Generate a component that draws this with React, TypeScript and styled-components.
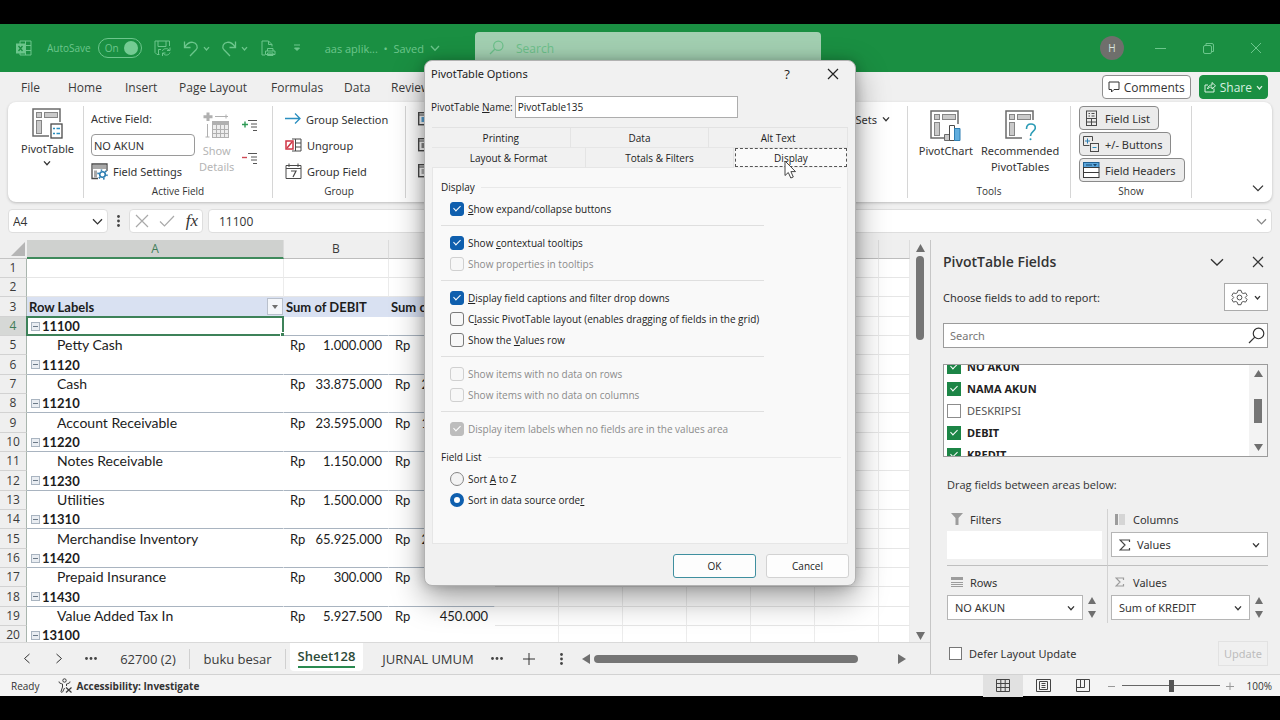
import React from "react";
import styled, { createGlobalStyle, css } from "styled-components";

const UI = `"Open Sans", "Noto Sans", sans-serif`;
const UI_WIDE = `"Noto Sans", "Open Sans", sans-serif`;
const CELL = `Lato, "Noto Sans", sans-serif`;
const GREEN = "#1a8f42";
const MINT = "#6cc68c";

const GlobalStyle = createGlobalStyle`
  *, *::before, *::after { box-sizing: border-box; }
  body { margin: 0; background: #000; font-family: ${UI}; font-size: 12px; color: #333; }
  button, input, select { font: inherit; color: inherit; margin: 0; padding: 0; border: 0; background: none; border-radius: 0; }
  svg { display: block; flex: none; }
  fieldset { margin: 0; padding: 0; border: 0; min-width: 0; }
  legend { padding: 0; width: 100%; }
`;

/* ---------- shell ---------- */
const Screen = styled.div`
  position: relative;
  height: 100vh;
  padding: 24px 0;
  display: flex;
  flex-direction: column;
  background: #000;
  overflow: hidden;
`;
const AppWindow = styled.div`
  flex: 1;
  min-height: 0;
  display: flex;
  flex-direction: column;
  background: #f0f0f0;
`;

/* ---------- title bar ---------- */
const TitleBar = styled.header`
  flex: none;
  height: 48px;
  display: grid;
  grid-template-columns: 475px minmax(0, 346px) 1fr;
  align-items: center;
  background: ${GREEN};
  color: ${MINT};
  font-size: 11px;
`;
const QuickAccess = styled.div`
  display: flex;
  align-items: center;
  padding-left: 16px;
`;
const GhostButton = styled.button<{ $left?: number }>`
  display: flex;
  align-items: center;
  gap: 4px;
  margin-left: ${(p) => p.$left ?? 0}px;
`;
const AutoSave = styled.label`
  display: flex;
  align-items: center;
  gap: 7px;
  margin-left: 15px;
  font-size: 10px;
`;
const Toggle = styled.span`
  position: relative;
  display: flex;
  align-items: center;
  width: 44px;
  height: 20px;
  padding-left: 6px;
  border: 1px solid ${MINT};
  border-radius: 10px;
  input {
    position: absolute;
    right: 3px;
    width: 14px;
    height: 14px;
    border-radius: 50%;
    background: #74cb93;
    appearance: none;
  }
`;
const FileName = styled.button`
  display: flex;
  align-items: center;
  gap: 6px;
  margin-left: 24px;
  white-space: nowrap;
`;
const TitleSearch = styled.label`
  align-self: end;
  height: 40px;
  display: flex;
  align-items: start;
  gap: 12px;
  padding: 8px 14px;
  background: #a2cfb1;
  border-radius: 4px 4px 0 0;
  color: #6cc08a;
  input { width: 200px; height: 16px; font-size: 12px; }
  input::placeholder { color: #6cc08a; opacity: 1; }
`;
const WindowControls = styled.div`
  display: flex;
  align-items: center;
  justify-content: flex-end;
  padding-right: 18px;
`;
const Avatar = styled.button`
  width: 24px;
  height: 24px;
  margin-right: 6px;
  border-radius: 50%;
  background: #6f6f6c;
  color: #d9e4dc;
  font-size: 10px;
`;
const WindowButton = styled.button`
  width: 36px;
  height: 24px;
  margin-left: 12px;
  display: flex;
  align-items: center;
  justify-content: center;
  &:last-child { width: 12px; margin-left: 24px; }
`;

/* ---------- ribbon ---------- */
const MenuRow = styled.nav`
  flex: none;
  height: 30px;
  display: flex;
  align-items: center;
  padding: 0 12px 0 21px;
  font-size: 12px;
`;
const MenuTab = styled.a<{ $w: number }>`
  flex: none;
  width: ${(p) => p.$w}px;
  color: #3a3a3a;
  text-decoration: none;
  white-space: nowrap;
`;
const Spacer = styled.div` flex: 1; `;
const PillButton = styled.button<{ $solid?: boolean }>`
  height: 24px;
  display: flex;
  align-items: center;
  gap: 4px;
  padding: 0 ${(p) => (p.$solid ? 4 : 5)}px;
  margin-left: 8px;
  border-radius: 4px;
  border: 1px solid ${(p) => (p.$solid ? GREEN : "#8f8f8f")};
  background: ${(p) => (p.$solid ? GREEN : "#fff")};
  color: ${(p) => (p.$solid ? "#d8f0e0" : "#333")};
`;
const Ribbon = styled.section`
  flex: none;
  height: 100px;
  margin: 0 8px;
  display: flex;
  padding: 4px 0;
  background: #fff;
  border-radius: 8px;
  box-shadow: 0 1px 3px rgba(0, 0, 0, 0.22);
`;
const Group = styled.div<{ $w?: number }>`
  flex: ${(p) => (p.$w ? `0 0 ${p.$w}px` : "1 1 0")};
  min-width: 0;
  display: flex;
  flex-direction: column;
  border-right: 1px solid #d6d6d6;
  &:last-child { border-right: 0; }
`;
const GroupBody = styled.div<{ $pad?: string; $gap?: number; $justify?: string }>`
  flex: 1;
  min-height: 0;
  display: flex;
  justify-content: ${(p) => p.$justify ?? "flex-start"};
  gap: ${(p) => p.$gap ?? 0}px;
  padding: ${(p) => p.$pad ?? "0"};
`;
const GroupName = styled.div`
  height: 14px;
  line-height: 14px;
  font-size: 10px;
  text-align: center;
`;
const Stack = styled.div<{ $w?: number; $gap?: number }>`
  display: flex;
  flex-direction: column;
  gap: ${(p) => p.$gap ?? 0}px;
  width: ${(p) => (p.$w ? `${p.$w}px` : "auto")};
`;
const BigButton = styled.button<{ $muted?: boolean }>`
  display: flex;
  flex-direction: column;
  align-items: center;
  gap: ${(p) => (p.$muted ? 4 : 2)}px;
  line-height: 16px;
  font-size: 11px;
  font-family: ${UI_WIDE};
  color: ${(p) => (p.$muted ? "#b5b5b5" : "#333")};
`;
const LineButton = styled.button`
  height: 26px;
  display: flex;
  align-items: center;
  gap: 5px;
  font-size: 11px;
  font-family: ${UI_WIDE};
  white-space: nowrap;
`;
const FieldLabel = styled.label`
  height: 26px;
  line-height: 26px;
  font-size: 11px;
  font-family: ${UI_WIDE};
`;
const FieldInput = styled.input`
  width: 104px;
  height: 22px;
  margin: 2px 0;
  padding: 0 2px;
  border: 1px solid #9a9a9a;
  border-radius: 4px;
  background: #fff;
  font-size: 11px;
  font-family: ${UI_WIDE};
`;
const ToggleButton = styled.button`
  height: 24px;
  margin-bottom: 2px;
  padding: 0 8px 0 3px;
  display: flex;
  align-items: center;
  align-self: flex-start;
  gap: 5px;
  border: 1px solid #8a8a8a;
  border-radius: 4px;
  background: #ebebeb;
  font-size: 11px;
  font-family: ${UI_WIDE};
  white-space: nowrap;
`;
const CollapseRibbon = styled.button`
  align-self: flex-end;
  margin: auto 8px 4px 0;
`;

/* ---------- formula bar ---------- */
const FormulaBar = styled.div`
  flex: none;
  height: 38px;
  display: flex;
  align-items: center;
  padding: 0 8px;
  font-size: 12px;
`;
const barBox = css`
  height: 24px;
  background: #fff;
  border: 1px solid #dedede;
  border-radius: 4px;
`;
const NameBox = styled.label`
  ${barBox}
  width: 100px;
  display: flex;
  align-items: center;
  padding: 0 4px;
  select { flex: 1; appearance: none; }
`;
const FxBox = styled.div`
  ${barBox}
  width: 74px;
  display: flex;
  align-items: center;
  justify-content: space-between;
  padding: 0 4px 0 5px;
`;
const FxButton = styled.button`
  font: italic 17px/20px "Liberation Serif", serif;
  color: #333;
`;
const FormulaBox = styled.label`
  ${barBox}
  flex: 1;
  margin-left: 5px;
  display: flex;
  align-items: center;
  padding: 0 4px 0 10px;
  input { flex: 1; }
`;
const Dots = styled.button`
  width: 21px;
  display: flex;
  justify-content: center;
`;

/* ---------- sheet ---------- */
const Workspace = styled.main`
  flex: 1;
  min-height: 0;
  display: flex;
`;
const SheetColumn = styled.div`
  flex: 1;
  min-width: 0;
  display: flex;
  flex-direction: column;
`;
const SheetArea = styled.div`
  flex: 1;
  min-height: 0;
  display: flex;
`;
const GridClip = styled.div`
  flex: 1;
  min-width: 0;
  overflow: hidden;
  background: #fff;
`;
const Grid = styled.table`
  width: 100%;
  table-layout: fixed;
  border-collapse: separate;
  border-spacing: 0;
  font-family: ${CELL};
  font-size: 13px;
  color: #1c1c1c;
  td, th { padding: 0; white-space: nowrap; line-height: 18px; }
`;
const ColHead = styled.th<{ $active?: boolean }>`
  && { line-height: 16px; }
  height: 19px;
  font: 400 12px ${UI};
  color: ${(p) => (p.$active ? "#3f7d58" : "#3a3a3a")};
  background: ${(p) => (p.$active ? "#cfd1cf" : "#efefef")};
  border-bottom: ${(p) => (p.$active ? "2px solid #3f8a5c" : "1px solid #bdbdbd")};
  border-right: 1px solid #dcdcdc;
`;
const Corner = styled.th`
  background: #efefef;
  border-bottom: 1px solid #c4c4c4;
  svg { margin: 0 2px 0 auto; }
`;
const Row = styled.tr`
  height: 19px;
  &:nth-child(3n) { height: 20px; }
`;
const RowHead = styled.th<{ $active?: boolean }>`
  font: 400 12px ${UI};
  text-align: center;
  color: ${(p) => (p.$active ? "#3f7d58" : "#3a3a3a")};
  background: ${(p) => (p.$active ? "#d6d8d6" : "#efefef")};
  border-right: 1px solid #a9b5ae;
  border-bottom: 1px solid #d2d2d2;
`;
type Tone = "plain" | "head" | "label" | "data";
const Cell = styled.td<{ $tone: Tone; $selected?: boolean }>`
  position: relative;
  overflow: ${(p) => (p.$selected ? "visible" : "hidden")};
  font-weight: ${(p) => (p.$tone === "head" || p.$tone === "label" ? 700 : 400)};
  background: ${(p) => (p.$tone === "head" ? "#d9e1f2" : "#fff")};
  border-bottom: 1px solid ${(p) => (p.$tone === "head" ? "#d9e1f2" : p.$tone === "label" ? "#a9b4c0" : p.$tone === "data" ? "#fff" : "#e6e6e6")};
  border-right: 1px solid ${(p) => (p.$tone === "plain" ? "#ececec" : "transparent")};
  ${(p) => p.$selected && css`
    &::before {
      content: "";
      position: absolute;
      inset: -1px;
      border: 2px solid #3d8259;
      pointer-events: none;
    }
    &::after {
      content: "";
      position: absolute;
      right: -2px;
      bottom: -2px;
      width: 5px;
      height: 5px;
      background: #3d8259;
      border: solid #fff;
      border-width: 1px 0 0 1px;
    }
  `}
`;
const CellFlex = styled.div<{ $indent?: number; $large?: boolean }>`
  display: flex;
  align-items: center;
  justify-content: space-between;
  height: 18px;
  padding-left: ${(p) => p.$indent ?? 2}px;
  font-size: ${(p) => (p.$large ? 14 : 13)}px;
`;
const Labelled = styled.span`
  display: flex;
  align-items: center;
  gap: 2px;
`;
const Money = styled.div`
  display: flex;
  justify-content: space-between;
  height: 18px;
  padding: 0 6px;
`;
const FilterButton = styled.button`
  width: 16px;
  height: 17px;
  display: flex;
  align-items: center;
  justify-content: center;
  background: #f4f6fa;
  border: 1px solid #b9c0cc;
`;
const Collapser = styled.button`
  width: 9px;
  height: 9px;
  display: flex;
  align-items: center;
  justify-content: center;
  border: 1px solid #a9b4c0;
  background: #e9edf2;
  &::before { content: ""; width: 5px; height: 1px; background: #6c7a88; }
`;
const VScroll = styled.div`
  width: 20px;
  display: flex;
  flex-direction: column;
  align-items: center;
  justify-content: space-between;
  padding: 4px 0 2px;
`;
const VTrack = styled.div`
  flex: 1;
  padding-top: 4px;
  &::before {
    content: "";
    display: block;
    width: 8px;
    height: 84px;
    border-radius: 4px;
    background: #757575;
  }
`;

/* ---------- sheet tabs ---------- */
const SheetTabs = styled.div`
  flex: none;
  height: 32px;
  display: flex;
  align-items: center;
  padding-left: 11px;
  border-top: 1px solid #d9d9d9;
  font-size: 13px;
`;
const NavButton = styled.button<{ $w?: number }>`
  width: ${(p) => p.$w ?? 32}px;
  height: 24px;
  display: flex;
  align-items: center;
  justify-content: center;
`;
const SheetTab = styled.button<{ $active?: boolean; $w: number; $last?: boolean }>`
  width: ${(p) => p.$w}px;
  height: ${(p) => (p.$active ? 28 : 20)}px;
  align-self: ${(p) => (p.$active ? "flex-start" : "center")};
  border-right: ${(p) => (p.$active || p.$last ? "0" : "1px solid #d0d0d0")};
  background: ${(p) => (p.$active ? "#fff" : "transparent")};
  color: ${(p) => (p.$active ? "#2c4a38" : "#3a3a3a")};
  font-weight: ${(p) => (p.$active ? 600 : 400)};
  border-radius: ${(p) => (p.$active ? "0 0 4px 4px" : "0")};
  margin: ${(p) => (p.$active ? "0 4px" : "0")};
  white-space: nowrap;
  span { display: inline-block; border-bottom: ${(p) => (p.$active ? "2px solid #2a8a50" : "0")}; line-height: 20px; }
`;
const HScroll = styled.div`
  flex: 1;
  display: flex;
  align-items: center;
  padding: 0 24px 0 13px;
`;
const HTrack = styled.div`
  flex: 1;
  padding: 0 4px;
  &::before {
    content: "";
    display: block;
    width: 88%;
    height: 8px;
    border-radius: 4px;
    background: #757575;
  }
`;

/* ---------- fields pane ---------- */
const Pane = styled.aside`
  flex: 0 0 350px;
  display: flex;
  flex-direction: column;
  padding: 8px 12px;
  border-left: 1px solid #c6c6c6;
  font-size: 11px;
  font-family: ${UI_WIDE};
`;
const PaneHead = styled.div<{ $h: number }>`
  height: ${(p) => p.$h}px;
  display: flex;
  align-items: center;
  justify-content: space-between;
`;
const PaneTitle = styled.h2`
  margin: 0;
  font: 600 14px/28px ${UI};
`;
const IconRow = styled.div`
  display: flex;
  gap: 28px;
  padding-right: 4px;
`;
const GearButton = styled.button`
  width: 44px;
  height: 28px;
  display: flex;
  align-items: center;
  justify-content: center;
  gap: 6px;
  background: #fff;
  border: 1px solid #ababab;
`;
const PaneSearch = styled.label`
  height: 25px;
  margin-top: 5px;
  display: flex;
  align-items: center;
  padding: 0 2px 0 6px;
  background: #fff;
  border: 1px solid #9b9b9b;
  input { flex: 1; min-width: 0; }
  input::placeholder { color: #777; opacity: 1; }
`;
const FieldPanel = styled.div`
  height: 93px;
  margin-top: 16px;
  display: flex;
  overflow: hidden;
  background: #fff;
  border: 1px solid #9b9b9b;
`;
const FieldItems = styled.div`
  flex: 1;
  display: flex;
  flex-direction: column;
  justify-content: center;
  padding-left: 3px;
`;
const FieldItem = styled.label<{ $on: boolean }>`
  flex: none;
  height: 22px;
  display: flex;
  align-items: center;
  gap: 6px;
  font-weight: ${(p) => (p.$on ? 700 : 400)};
  color: ${(p) => (p.$on ? "#222" : "#555")};
`;
const tick = css`
  &:checked::after {
    content: "";
    width: 4px;
    height: 7px;
    margin-bottom: 2px;
    border: solid #fff;
    border-width: 0 1px 1px 0;
    transform: rotate(45deg);
  }
`;
const GreenCheck = styled.input`
  width: 14px;
  height: 14px;
  display: flex;
  align-items: center;
  justify-content: center;
  appearance: none;
  border: 1px solid #8c8c8c;
  background: #fff;
  &:checked { background: #1c8546; border-color: #1c8546; }
  ${tick}
`;
const MiniScroll = styled.div`
  width: 18px;
  display: flex;
  flex-direction: column;
  align-items: center;
  justify-content: space-between;
  padding: 5px 0;
  background: #f3f3f3;
`;
const MiniThumb = styled.div`
  width: 8px;
  height: 24px;
  background: #757575;
`;
const AreasTitle = styled.p`
  margin: 17px 0 13px 4px;
  line-height: 22px;
  font-family: ${UI};
`;
const Areas = styled.div`
  display: grid;
  grid-template-columns: 160px 1fr;
  margin-left: 4px;
`;
const Area = styled.div<{ $side: "l" | "r"; $low?: boolean }>`
  height: 57px;
  padding-top: ${(p) => (p.$low ? 6 : 0)}px;
  padding-left: ${(p) => (p.$side === "r" ? 3 : 0)}px;
  border-left: ${(p) => (p.$side === "r" ? "1px solid #d2d2d2" : "0")};
  border-bottom: ${(p) => (p.$low ? "0" : "1px solid #bfbfbf")};
`;
const AreaName = styled.div<{ $side: "l" | "r" }>`
  height: 20px;
  display: flex;
  align-items: center;
  gap: ${(p) => (p.$side === "l" ? 7 : 8)}px;
  padding-left: 4px;
`;
const AreaLine = styled.div`
  display: flex;
  align-items: center;
  padding-top: 2px;
`;
const EmptyDrop = styled.div`
  height: 28px;
  width: 155px;
  margin-top: 2px;
  background: #fff;
`;
const FieldPill = styled.button`
  flex: 1;
  height: 25px;
  margin-top: 1px;
  display: flex;
  align-items: center;
  gap: 6px;
  padding: 0 7px;
  background: #fff;
  border: 1px solid #b5b5b5;
  svg:last-child { margin-left: auto; }
`;
const SpinButtons = styled.div<{ $mr?: number }>`
  width: 18px;
  display: flex;
  flex-direction: column;
  align-items: center;
  gap: 7px;
  margin-right: ${(p) => p.$mr ?? 0}px;
`;
const DeferRow = styled.div`
  margin-top: auto;
  height: 25px;
  display: flex;
  align-items: center;
  justify-content: space-between;
  padding-left: 6px;
`;
const DeferLabel = styled.label`
  display: flex;
  align-items: center;
  gap: 7px;
  input { width: 13px; height: 13px; appearance: none; background: #fff; border: 1px solid #777; }
`;
const UpdateButton = styled.button`
  width: 50px;
  height: 25px;
  border: 1px solid #e2e2e2;
  color: #bdbdbd;
`;

/* ---------- status bar ---------- */
const StatusBar = styled.footer`
  flex: none;
  height: 22px;
  display: flex;
  align-items: center;
  padding: 0 8px 0 11px;
  background: #f4f4f4;
  border-top: 1px solid #d2d2d2;
  font-size: 10px;
`;
const Accessibility = styled.button`
  display: flex;
  align-items: center;
  gap: 3px;
  margin-left: 19px;
  font-weight: 700;
`;
const ViewButton = styled.button<{ $active?: boolean }>`
  width: 40px;
  height: 22px;
  display: flex;
  align-items: center;
  justify-content: center;
  background: ${(p) => (p.$active ? "#e1e1e1" : "transparent")};
`;
const Zoom = styled.label`
  display: flex;
  align-items: center;
  gap: 6px;
  margin-left: 5px;
  input { width: 98px; height: 12px; appearance: none; }
  input::-webkit-slider-runnable-track { height: 12px; background: linear-gradient(#666, #666) center / 100% 1px no-repeat; }
  input::-webkit-slider-thumb { appearance: none; width: 5px; height: 12px; background: #555; }
`;
const ZoomValue = styled.span`
  width: 38px;
  text-align: right;
`;

/* ---------- dialog ---------- */
const Dialog = styled.section`
  position: absolute;
  top: 60px;
  left: calc(50% - 216px);
  width: 432px;
  padding: 0 6px 7px;
  display: flex;
  flex-direction: column;
  background: #f1f1f1;
  border: 1px solid #b2b2b2;
  border-radius: 8px;
  box-shadow: 0 12px 32px rgba(0, 0, 0, 0.38), 0 0 12px rgba(0, 0, 0, 0.2);
  font-size: 10px;
  color: #222;
`;
const DialogTitle = styled.div`
  height: 25px;
  display: flex;
  align-items: center;
  font-size: 11px;
  h1 { flex: 1; margin: 0; font: 400 11px ${UI_WIDE}; }
  button { width: 46px; display: flex; justify-content: center; font-size: 13px; }
  button:last-child { margin-right: -7px; }
`;
const NameRow = styled.label`
  height: 22px;
  margin-top: 10px;
  display: flex;
  align-items: center;
  gap: 2px;
  input { width: 223px; height: 22px; padding: 0 2px; background: #fff; border: 1px solid #adadad; }
`;
const TabRow = styled.div<{ $cols: string }>`
  display: grid;
  grid-template-columns: ${(p) => p.$cols};
  height: 20px;
`;
const TabStrip = styled.div`
  margin: 9px 1px 0;
  border-top: 1px solid #e2e2e2;
`;
const DialogTab = styled.button<{ $active?: boolean }>`
  border-right: 1px solid #e4e4e4;
  border-bottom: 1px solid #e6e6e6;
  line-height: 16px;
  ${(p) => p.$active && css`
    background: #fafafa;
    border: 1px dashed #555;
    margin: 0 1px 1px;
  `}
`;
const TabPanel = styled.div`
  height: 376px;
  padding: 8px 6px 0 8px;
  margin: 0 1px;
  background: #f9f9f9;
  border: 1px solid #e6e6e6;
  border-top: 0;
`;
const OptionGroup = styled.fieldset`
  & + & { margin-top: 7px; }
`;
const Legend = styled.span`
  display: flex;
  align-items: center;
  gap: 6px;
  height: 22px;
  &::after { content: ""; flex: 1; height: 1px; background: #e9e9e9; }
`;
const Rule = styled.hr`
  width: 323px;
  height: 1px;
  margin: 6px 0;
  border: 0;
  background: #dfdfdf;
`;
const Option = styled.label<{ $off?: boolean }>`
  height: 21px;
  display: flex;
  align-items: center;
  gap: 4px;
  padding-left: 9px;
  white-space: pre;
  color: ${(p) => (p.$off ? "#8b8b8b" : "#222")};
`;
const Check = styled.input`
  width: 14px;
  height: 14px;
  display: flex;
  align-items: center;
  justify-content: center;
  appearance: none;
  border: 1px solid #7a7a7a;
  border-radius: 3px;
  background: #f7f7f7;
  &:checked { background: #0f5fae; border-color: #0f5fae; }
  &:disabled { border-color: #d0d0d0; }
  &:disabled:checked { background: #bdbdbd; border-color: #bdbdbd; }
  ${tick}
`;
const RadioDot = styled.input`
  width: 14px;
  height: 14px;
  appearance: none;
  border: 1px solid #858585;
  border-radius: 50%;
  background: #f3f3f3;
  &:checked { border: 4px solid #0f5fae; background: #fff; }
`;
const Actions = styled.div`
  display: flex;
  justify-content: flex-end;
  gap: 10px;
  margin-top: 10px;
`;
const ActionButton = styled.button<{ $primary?: boolean }>`
  width: 83px;
  height: 24px;
  background: #fdfdfd;
  border: 1px solid ${(p) => (p.$primary ? "#3f8f9f" : "#d2d2d2")};
  border-radius: 3px;
`;
const Pointer = styled.svg`
  position: absolute;
  left: 359px;
  top: 99px;
`;

/* ---------- icons ---------- */
type IconProps = { children: React.ReactNode; w?: number; h?: number; color?: string; sw?: number };
const Icon = ({ children, w = 16, h = 16, color = "currentColor", sw = 1 }: IconProps) => (
  <svg width={w} height={h} viewBox={`0 0 ${w} ${h}`} fill="none" stroke={color} strokeWidth={sw} aria-hidden="true">{children}</svg>
);
const Chevron = ({ size = 8, sw = 1.3, color }: { size?: number; sw?: number; color?: string }) => (
  <Icon w={size} h={size} sw={sw} color={color}><path d={`M1 ${size * 0.3}L${size / 2} ${size * 0.72}L${size - 1} ${size * 0.3}`} /></Icon>
);
const Cross = ({ size = 12, color, sw = 1.2 }: { size?: number; color?: string; sw?: number }) => (
  <Icon w={size} h={size} sw={sw} color={color}><path d={`M1 1L${size - 1} ${size - 1}M${size - 1} 1L1 ${size - 1}`} /></Icon>
);
const Tri = ({ dir, w = 10, h = 8 }: { dir: "up" | "down" | "left" | "right"; w?: number; h?: number }) => {
  const d = {
    up: `M0 ${h}L${w / 2} 0L${w} ${h}Z`,
    down: `M0 0L${w / 2} ${h}L${w} 0Z`,
    left: `M${w} 0L0 ${h / 2}L${w} ${h}Z`,
    right: `M0 0L${w} ${h / 2}L0 ${h}Z`,
  }[dir];
  return <svg width={w} height={h} aria-hidden="true"><path d={d} fill="#6f6f6f" /></svg>;
};
const Magnifier = ({ size = 16 }: { size?: number }) => (
  <Icon w={size} h={size} sw={1.2}><circle cx={size * 0.62} cy={size * 0.38} r={size * 0.31} /><path d={`M${size * 0.4} ${size * 0.6}L1 ${size - 1}`} /></Icon>
);
const PivotBase = () => (
  <>
    <path d="M28 14V1H1V28H17" stroke="#6b6b6b" strokeWidth="1.5" />
    <g fill="#c9c9c9" stroke="#858585">
      <rect x="4.500" y="4.500" width="5" height="5" />
      <rect x="12.500" y="4.500" width="13" height="5" />
      <rect x="4.500" y="12.500" width="5" height="13" />
    </g>
  </>
);
const PivotTableIcon = () => (
  <Icon w={31} h={31}><PivotBase />
    <rect x="19" y="16" width="11" height="14" fill="#fff" stroke="#4a4a4a" strokeWidth="1.3" />
    <path d="M21 20.500H23M24.500 20.500H28M21 25.500H23M24.500 25.500H28" stroke="#2b8fc0" strokeWidth="1.600" />
  </Icon>
);
const PivotChartIcon = () => (
  <Icon w={31} h={31}><PivotBase />
    <path d="M14.500 30.500V24.500H19.500V30.500Z" fill="#c9c9c9" stroke="#6b6b6b" />
    <path d="M19.500 30.500V15.500H24.500V30.500Z" fill="#fff" stroke="#4a4a4a" />
    <path d="M24.500 30.500V18.500H30V30.500Z" fill="#62aede" stroke="#2f7fb3" />
  </Icon>
);
const RecommendedIcon = () => (
  <Icon w={31} h={31}><path d="M28 10V1H1V28H17" stroke="#6b6b6b" strokeWidth="1.5" />
    <g fill="#c9c9c9" stroke="#858585"><rect x="4.500" y="4.500" width="5" height="5" /><rect x="12.500" y="4.500" width="13" height="5" /><rect x="4.500" y="12.500" width="5" height="13" /></g>
    <path d="M21.500 19C21.500 15.500 23.500 14 26 14C28.500 14 30.300 15.700 30.300 18C30.300 21.500 25.500 21.500 25.500 26" stroke="#2b9bb5" strokeWidth="1.600" /><circle cx="25.500" cy="29.300" r="1" fill="#2b9bb5" stroke="none" />
  </Icon>
);
const FieldSettingsIcon = () => (
  <Icon w={17} h={17}>
    <path d="M16 8V1H1V15.500H7" stroke="#4a4a4a" strokeWidth="1.300" />
    <rect x="2" y="2" width="13" height="4" fill="#a8a8a8" stroke="none" /><rect x="3" y="7.500" width="3" height="7" fill="#a8a8a8" stroke="none" />
    <circle cx="11.500" cy="11.500" r="2.800" stroke="#2b7cb0" strokeWidth="1.600" /><circle cx="11.500" cy="11.500" r="4.500" stroke="#2b7cb0" strokeWidth="1.600" strokeDasharray="1.600 3.100" />
  </Icon>
);
const ShowDetailsIcon = () => (
  <Icon w={27} h={27} color="#b0b0b0">
    <path d="M5 0.500V9M0.500 4.800H9.500" strokeWidth="3" />
    <path d="M12 4.500H25M23 2.500V6.500M4.500 12V25M2.500 25H6.500" strokeWidth="1" />
    <rect x="9.500" y="9.500" width="16" height="16" fill="#ededed" /><path d="M9.500 11.500H25.500" strokeWidth="3" /><path d="M9.500 17.500H25.500M9.500 21.500H25.500M13.500 12V25.500M17.500 12V25.500M21.500 12V25.500" />
  </Icon>
);
const ExpandLines = ({ plus }: { plus?: boolean }) => (
  <Icon w={16} h={12}>
    <path d={plus ? "M0 5.500H6M3 2.500V8.500" : "M0 5.500H5"} stroke={plus ? "#2e9a55" : "#cf4a55"} strokeWidth="1.400" />
    <path d="M6 1.500H15M9 5H15M9 8H15M11 11.500H15" stroke="#555" />
  </Icon>
);
const ArrowIcon = () => <Icon color="#2b8fc0" sw={1.3}><path d="M0 7.500H15M10 2.500L15 7.500L10 12.500" /></Icon>;
const UngroupIcon = () => (
  <Icon w={17} h={14}>
    <rect x="1" y="3" width="7" height="8" stroke="#cf3545" strokeWidth="1.500" /><path d="M2 10L7 4" stroke="#cf3545" strokeWidth="1.500" />
    <path d="M7 1H16V13H7M10.500 1V13M10.500 5H16M10.500 9H16" stroke="#4a4a4a" />
  </Icon>
);
const GroupFieldIcon = () => (
  <Icon w={17} h={17} color="#4a4a4a">
    <path d="M1 2.500H16V15.500H1ZM1 5.500H16M4 0.500V4M13 0.500V4" /><path d="M6 8H11L8 14" strokeWidth="1.200" />
  </Icon>
);
const SlicerIcon = ({ tint }: { tint: string }) => (
  <Icon w={16} h={14} color="#4a4a4a"><rect x="0.700" y="0.700" width="14" height="12" strokeWidth="1.400" /><path d="M1 3H15" /><rect x="4" y="5.500" width="8" height="4" fill={tint} stroke={tint} /></Icon>
);
const FieldListIcon = () => (
  <Icon w={17} h={17} color="#4a4a4a"><rect x="3.500" y="1" width="10" height="14.500" /><path d="M3.500 8.500H13.500M3.500 12H13.500M8.500 8.500V15.500M5.500 3.500H7M8.500 3.500H11.500M5.500 6H7M8.500 6H11.500" /></Icon>
);
const PlusMinusIcon = () => (
  <Icon w={17} h={17}><path d="M4.500 2.500V7.500M2 5H7" stroke="#2b7cb0" /><path d="M6.500 9.500H0.500V0.500H9.500V5" stroke="#4a4a4a" /><rect x="7.500" y="7.500" width="8" height="8" stroke="#4a4a4a" /><path d="M9.500 11.500H13.500" stroke="#2b8fc0" /></Icon>
);
const HeadersIcon = () => (
  <Icon w={17} h={17} color="#3a3a3a"><rect x="0.500" y="0.500" width="15.500" height="5" fill="#5aa6dc" stroke="#205f90" /><path d="M3 3H9" stroke="#16466c" /><path d="M10 2H14L12 4.500Z" fill="#16466c" stroke="none" /><rect x="0.500" y="5.500" width="15.500" height="10" fill="#fff" /><path d="M0.500 10.500H16" /></Icon>
);
const ExcelIcon = () => (
  <Icon w={16} h={16} color={MINT}><path d="M4 4V1H15V15H4V13M9.500 1V15M9 5.500H15M9 10.500H15" /><rect x="0.500" y="4" width="8" height="9" fill={MINT} /><path d="M2.500 6L6.500 11M6.500 6L2.500 11" stroke={GREEN} strokeWidth="1.300" /></Icon>
);
const SaveIcon = () => (
  <Icon w={17} h={16} color={MINT}><path d="M5.500 14.500H3L1 12.500V1H15.500V6M4 1V6.500H12V1M4.500 14V9.500H7" /><path d="M8.500 11C8.500 8.500 14 7.500 15.500 10.500M16 7.500V10.500H13M16 12.500C15 15.800 10 15.800 9 13M8.500 16V13H11.500" /></Icon>
);
const UndoIcon = ({ flip }: { flip?: boolean }) => (
  <svg width="16" height="17" viewBox="0 0 16 17" fill="none" stroke={MINT} strokeWidth="1.300" aria-hidden="true">
    <g transform={flip ? "matrix(-1 0 0 1 16 0)" : undefined}><path d="M1.500 1.500V7.500H7.500M1.800 7.200C4 3.500 7 2 9.800 2.300C13.800 2.800 15.500 7 13 9.800L7 16" /></g>
  </svg>
);
const PreviewIcon = () => (
  <Icon w={15} h={16} color={MINT}><path d="M4 15H1V1H7.500L11 4.500V6.500M7.500 1V4.500H11" /><path d="M6.500 8.500H12V11M6.500 8.500V11M4.500 11H14V14.500H4.500ZM6.500 13H12V15.500H6.500Z" /></Icon>
);
const FormulaCheck = () => <Icon w={16} h={14} color="#a9a9a9" sw={1.2}><path d="M1 7.500L5.500 12L15 2" /></Icon>;
const GearIcon = () => (
  <Icon w={17} h={17} color="#555"><path d="M6.300 3.700L7 1.300H10L10.700 3.700L12.200 4.500L14.600 3.900L16.100 6.500L14.400 8.300V8.700L16.100 10.500L14.600 13.100L12.200 12.500L10.700 13.300L10 15.700H7L6.300 13.300L4.800 12.500L2.400 13.100L0.900 10.500L2.600 8.700V8.300L0.900 6.500L2.400 3.900L4.800 4.500Z" strokeLinejoin="round" /><circle cx="8.500" cy="8.500" r="2.400" /></Icon>
);
const SigmaIcon = ({ color = "#444", size = 11 }: { color?: string; size?: number }) => (
  <Icon w={size} h={size} color={color} sw={1.2}><path d={`M${size - 1.5} 3V1H1L${size / 2} ${size / 2}L1 ${size - 1}H${size - 1.5}V${size - 3}`} /></Icon>
);
const PersonIcon = () => (
  <Icon w={15} h={15} color="#3a3a3a"><circle cx="6.500" cy="2.500" r="1.700" /><path d="M1 3.500C0.500 5 3 5.500 4.500 6V9L3 13.500C3 14.800 4.500 14.500 4.800 13.500L6.500 10M12 3.500C12.500 5 10 5.500 8.500 6V8" /><path d="M8 9.500L13.500 14.500M13.500 9.500L8 14.500" strokeWidth="1.200" /></Icon>
);
const DotRow = ({ vertical }: { vertical?: boolean }) => (
  <svg width={vertical ? 3 : 12} height={vertical ? 12 : 3} aria-hidden="true" fill="#444">
    {[1.5, 6, 10.5].map((p) => <circle key={p} cx={vertical ? 1.5 : p} cy={vertical ? p : 1.5} r="1.400" />)}
  </svg>
);

/* ---------- data ---------- */
const menu: [string, number][] = [["File", 47], ["Home", 57], ["Insert", 54], ["Page Layout", 92], ["Formulas", 73], ["Data", 47], ["Review", 50]];
const rows: { tone: Tone; a?: string; b?: string; c?: string }[] = [
  { tone: "plain" }, { tone: "plain" }, { tone: "head", a: "Row Labels" },
  { tone: "label", a: "11100" }, { tone: "data", a: "Petty Cash", b: "1.000.000", c: "" },
  { tone: "label", a: "11120" }, { tone: "data", a: "Cash", b: "33.875.000", c: "20.000.000" },
  { tone: "label", a: "11210" }, { tone: "data", a: "Account Receivable", b: "23.595.000", c: "10.000.000" },
  { tone: "label", a: "11220" }, { tone: "data", a: "Notes Receivable", b: "1.150.000", c: "" },
  { tone: "label", a: "11230" }, { tone: "data", a: "Utilities", b: "1.500.000", c: "" },
  { tone: "label", a: "11310" }, { tone: "data", a: "Merchandise Inventory", b: "65.925.000", c: "20.000.000" },
  { tone: "label", a: "11420" }, { tone: "data", a: "Prepaid Insurance", b: "300.000", c: "" },
  { tone: "label", a: "11430" }, { tone: "data", a: "Value Added Tax In", b: "5.927.500", c: "450.000" },
  { tone: "label", a: "13100" },
];
const emptyCols = ["d", "e", "f", "g", "h", "i", "j"];
const fields: [string, boolean][] = [["NO AKUN", true], ["NAMA AKUN", true], ["DESKRIPSI", false], ["DEBIT", true], ["KREDIT", true]];

const AmountCell = ({ tone, value, heading }: { tone: Tone; value?: string; heading: string }) => (
  <Cell $tone={tone}>
    {tone === "head" && <CellFlex>{heading}</CellFlex>}
    {tone === "data" && <Money><span>Rp</span><span>{value}</span></Money>}
  </Cell>
);

const Sheet = () => (
  <Grid>
    <colgroup>
      <col style={{ width: 27 }} /><col style={{ width: 257 }} /><col style={{ width: 105 }} /><col style={{ width: 106 }} />
      {emptyCols.slice(0, -1).map((c) => <col key={c} style={{ width: 64 }} />)}<col />
    </colgroup>
    <thead>
      <tr>
        <Corner><svg width="14" height="14"><path d="M14 0V14H0Z" fill="#b5b5b5" /></svg></Corner>
        <ColHead $active>A</ColHead><ColHead>B</ColHead><ColHead />
        {emptyCols.map((c) => <ColHead key={c} />)}
      </tr>
    </thead>
    <tbody>
      {rows.map((r, i) => (
        <Row key={i}>
          <RowHead $active={i === 3}>{i + 1}</RowHead>
          <Cell $tone={r.tone} $selected={i === 3}>
            {r.tone === "head" && <CellFlex>{r.a}<FilterButton aria-label="Filter"><Tri dir="down" w={6} h={4} /></FilterButton></CellFlex>}
            {r.tone === "label" && <CellFlex $indent={4}><Labelled><Collapser aria-label="Collapse" />{r.a}</Labelled></CellFlex>}
            {r.tone === "data" && <CellFlex $indent={30} $large>{r.a}</CellFlex>}
          </Cell>
          <AmountCell tone={r.tone} value={r.b} heading="Sum of DEBIT" />
          <AmountCell tone={r.tone} value={r.c} heading="Sum of KREDIT" />
          {emptyCols.map((c) => <Cell key={c} $tone="plain" />)}
        </Row>
      ))}
    </tbody>
  </Grid>
);

const OptionsDialog = () => (
  <Dialog role="dialog" aria-labelledby="dlg-title">
    <DialogTitle>
      <h1 id="dlg-title">PivotTable Options</h1>
      <button aria-label="Help">?</button>
      <button aria-label="Close"><Cross size={12} color="#222" /></button>
    </DialogTitle>
    <NameRow><span>PivotTable <u>N</u>ame:</span><input defaultValue="PivotTable135" /></NameRow>
    <TabStrip>
      <TabRow $cols="1fr 1fr 1fr"><DialogTab>Printing</DialogTab><DialogTab>Data</DialogTab><DialogTab>Alt Text</DialogTab></TabRow>
      <TabRow $cols="154px 1fr 114px"><DialogTab>Layout &amp; Format</DialogTab><DialogTab>Totals &amp; Filters</DialogTab><DialogTab $active>Display</DialogTab></TabRow>
    </TabStrip>
    <TabPanel>
      <OptionGroup>
        <legend><Legend>Display</Legend></legend>
        <Option><Check type="checkbox" defaultChecked /><span><u>S</u>how expand/collapse buttons</span></Option>
        <Rule />
        <Option><Check type="checkbox" defaultChecked /><span>Show <u>c</u>ontextual tooltips</span></Option>
        <Option $off><Check type="checkbox" disabled /><span>Show properties in tooltips</span></Option>
        <Rule />
        <Option><Check type="checkbox" defaultChecked /><span><u>D</u>isplay field captions and filter drop downs</span></Option>
        <Option><Check type="checkbox" /><span>C<u>l</u>assic PivotTable layout (enables dragging of fields in the grid)</span></Option>
        <Option><Check type="checkbox" /><span>Show the <u>V</u>alues row</span></Option>
        <Rule />
        <Option $off><Check type="checkbox" disabled /><span>Show items with no data on rows</span></Option>
        <Option $off><Check type="checkbox" disabled /><span>Show items with no data on columns</span></Option>
        <Rule />
        <Option $off><Check type="checkbox" disabled defaultChecked /><span>Display item labels when no fields are in the values area</span></Option>
      </OptionGroup>
      <OptionGroup>
        <legend><Legend>Field List</Legend></legend>
        <Option><RadioDot type="radio" name="sort" /><span>Sort <u>A</u> to Z</span></Option>
        <Option><RadioDot type="radio" name="sort" defaultChecked /><span>Sort in data source orde<u>r</u></span></Option>
      </OptionGroup>
    </TabPanel>
    <Actions><ActionButton $primary>OK</ActionButton><ActionButton>Cancel</ActionButton></Actions>
    <Pointer width="13" height="20" aria-hidden="true"><path d="M1 1V15.500L4.300 12.500L6.800 18L9.300 17L6.900 11.600H11.500Z" fill="#fff" stroke="#444" /></Pointer>
  </Dialog>
);

const FieldsPane = () => (
  <Pane>
    <PaneHead $h={28}>
      <PaneTitle>PivotTable Fields</PaneTitle>
      <IconRow><button aria-label="Pane options"><Chevron size={14} /></button><button aria-label="Close pane"><Cross size={12} /></button></IconRow>
    </PaneHead>
    <PaneHead $h={42}><span>Choose fields to add to report:</span><GearButton aria-label="Tools"><GearIcon /><Chevron size={7} /></GearButton></PaneHead>
    <PaneSearch><input placeholder="Search" aria-label="Search fields" /><Magnifier size={17} /></PaneSearch>
    <FieldPanel>
      <FieldItems>{fields.map(([n, on]) => <FieldItem key={n} $on={on}><GreenCheck type="checkbox" defaultChecked={on} />{n}</FieldItem>)}</FieldItems>
      <MiniScroll><Tri dir="up" w={9} h={7} /><MiniThumb /><Tri dir="down" w={9} h={7} /></MiniScroll>
    </FieldPanel>
    <AreasTitle>Drag fields between areas below:</AreasTitle>
    <Areas>
      <Area $side="l">
        <AreaName $side="l"><svg width="12" height="12"><path d="M0 0H12L7.500 5V12H4.500V5Z" fill="#9c9c9c" /></svg>Filters</AreaName>
        <EmptyDrop />
      </Area>
      <Area $side="r">
        <AreaName $side="r"><svg width="10" height="11"><path d="M0 0H3V11H0Z" fill="#9c9c9c" /><path d="M4 0H10V11H4Z" fill="#d5d5d5" /></svg>Columns</AreaName>
        <AreaLine><FieldPill><SigmaIcon size={12} />Values<Chevron size={8} /></FieldPill></AreaLine>
      </Area>
      <Area $side="l" $low>
        <AreaName $side="l"><svg width="12" height="10"><path d="M0 0H12V3H0ZM0 5H12V6H0ZM0 7H12V8H0ZM0 9H12V10H0Z" fill="#9c9c9c" /></svg>Rows</AreaName>
        <AreaLine><FieldPill>NO AKUN<Chevron size={8} /></FieldPill><SpinButtons $mr={6}><Tri dir="up" w={8} h={7} /><Tri dir="down" w={8} h={7} /></SpinButtons></AreaLine>
      </Area>
      <Area $side="r" $low>
        <AreaName $side="r"><SigmaIcon color="#9c9c9c" size={10} />Values</AreaName>
        <AreaLine><FieldPill>Sum of KREDIT<Chevron size={8} /></FieldPill><SpinButtons><Tri dir="up" w={8} h={7} /><Tri dir="down" w={8} h={7} /></SpinButtons></AreaLine>
      </Area>
    </Areas>
    <DeferRow><DeferLabel><input type="checkbox" />Defer Layout Update</DeferLabel><UpdateButton disabled>Update</UpdateButton></DeferRow>
  </Pane>
);

export default function App() {
  return (
    <Screen>
      <GlobalStyle />
      <AppWindow>
        <TitleBar>
          <QuickAccess>
            <ExcelIcon />
            <AutoSave>AutoSave<Toggle>On<input type="checkbox" defaultChecked aria-label="AutoSave" /></Toggle></AutoSave>
            <GhostButton $left={12} aria-label="Save"><SaveIcon /></GhostButton>
            <GhostButton $left={12} aria-label="Undo"><UndoIcon /><Chevron size={7} /></GhostButton>
            <GhostButton $left={11} aria-label="Redo"><UndoIcon flip /><Chevron size={7} /></GhostButton>
            <GhostButton $left={13} aria-label="Print preview"><PreviewIcon /></GhostButton>
            <GhostButton $left={17} aria-label="Customize"><Icon w={8} h={8}><path d="M1 1H7M1.500 4L4 6.500L6.500 4Z" fill={MINT} /></Icon></GhostButton>
            <FileName>aas aplik...&nbsp; •&nbsp; Saved<Chevron size={10} /></FileName>
          </QuickAccess>
          <TitleSearch><Magnifier size={15} /><input placeholder="Search" aria-label="Search" /></TitleSearch>
          <WindowControls>
            <Avatar>H</Avatar>
            <WindowButton aria-label="Minimize"><Icon w={11} h={11}><path d="M0 5.500H11" /></Icon></WindowButton>
            <WindowButton aria-label="Restore"><Icon w={11} h={11}><rect x="0.500" y="2.500" width="8" height="8" rx="1.500" /><path d="M3 2.500V0.500H9Q10.500 0.500 10.500 2V8.500H9" /></Icon></WindowButton>
            <WindowButton aria-label="Close"><Cross size={12} sw={1} /></WindowButton>
          </WindowControls>
        </TitleBar>
        <MenuRow>
          {menu.map(([n, w]) => <MenuTab key={n} href="#" $w={w}>{n}</MenuTab>)}
          <Spacer />
          <PillButton><Icon w={12} h={12}><path d="M1 1H11V8.500H6L3.500 11V8.500H1Z" /></Icon>Comments</PillButton>
          <PillButton $solid><Icon w={12} h={12}><path d="M4 4H1V11H10V7.500M3.500 8C4 5 6 4 8 4V1.500L11.500 4.800L8 8V6C6 6 4.500 6.500 3.500 8Z" /></Icon>Share<Chevron size={7} /></PillButton>
        </MenuRow>
        <Ribbon>
          <Group $w={76}><GroupBody $justify="center" $pad="2px 0 0 4px"><BigButton><PivotTableIcon />PivotTable<Chevron size={8} /></BigButton></GroupBody></Group>
          <Group $w={189}>
            <GroupBody $pad="0 0 0 7px">
              <Stack $w={108}>
                <FieldLabel htmlFor="active-field">Active Field:</FieldLabel>
                <FieldInput id="active-field" defaultValue="NO AKUN" />
                <LineButton><FieldSettingsIcon />Field Settings</LineButton>
              </Stack>
              <GroupBody $pad="6px 0 0" $gap={8}>
                <BigButton $muted><ShowDetailsIcon /><span>Show<br />Details</span></BigButton>
                <Stack $gap={7}><LineButton aria-label="Expand field"><ExpandLines plus /></LineButton><LineButton aria-label="Collapse field"><ExpandLines /></LineButton></Stack>
              </GroupBody>
            </GroupBody>
            <GroupName>Active Field</GroupName>
          </Group>
          <Group $w={133}>
            <GroupBody $pad="0 0 0 12px"><Stack>
              <LineButton><ArrowIcon />Group Selection</LineButton>
              <LineButton><UngroupIcon />Ungroup</LineButton>
              <LineButton><GroupFieldIcon />Group Field</LineButton>
            </Stack></GroupBody>
            <GroupName>Group</GroupName>
          </Group>
          <Group>
            <GroupBody $pad="0 17px 0 12px" $justify="space-between">
              <Stack>
                <LineButton aria-label="Insert slicer"><SlicerIcon tint="#5aa6dc" /></LineButton>
                <LineButton aria-label="Insert timeline"><SlicerIcon tint="#8a8a8a" /></LineButton>
                <LineButton aria-label="Filter connections"><SlicerIcon tint="#b5b5b5" /></LineButton>
              </Stack>
              <Stack><LineButton>Sets<Chevron size={8} /></LineButton></Stack>
            </GroupBody>
          </Group>
          <Group $w={163}>
            <GroupBody $pad="4px 0 0" $justify="center" $gap={8}>
              <BigButton><PivotChartIcon />PivotChart</BigButton>
              <BigButton><RecommendedIcon /><span>Recommended<br />PivotTables</span></BigButton>
            </GroupBody>
            <GroupName>Tools</GroupName>
          </Group>
          <Group $w={121}>
            <GroupBody $pad="0 0 0 8px"><Stack>
              <ToggleButton><FieldListIcon />Field List</ToggleButton>
              <ToggleButton><PlusMinusIcon />+/- Buttons</ToggleButton>
              <ToggleButton><HeadersIcon />Field Headers</ToggleButton>
            </Stack></GroupBody>
            <GroupName>Show</GroupName>
          </Group>
          <Group $w={80}><CollapseRibbon aria-label="Collapse ribbon"><Chevron size={12} /></CollapseRibbon></Group>
        </Ribbon>
        <FormulaBar>
          <NameBox><select aria-label="Name box"><option>A4</option></select><Chevron size={11} /></NameBox>
          <Dots aria-label="More"><DotRow vertical /></Dots>
          <FxBox><button aria-label="Cancel"><Cross size={14} color="#a9a9a9" /></button><button aria-label="Enter"><FormulaCheck /></button><FxButton aria-label="Insert function">fx</FxButton></FxBox>
          <FormulaBox><input defaultValue="11100" aria-label="Formula" /><Chevron size={11} color="#888" /></FormulaBox>
        </FormulaBar>
        <Workspace>
          <SheetColumn>
            <SheetArea>
              <GridClip><Sheet /></GridClip>
              <VScroll><Tri dir="up" w={9} h={8} /><VTrack /><Tri dir="down" w={9} h={8} /></VScroll>
            </SheetArea>
            <SheetTabs>
              <NavButton aria-label="Previous"><Icon w={8} h={11}><path d="M6.500 1L1.500 5.500L6.500 10" /></Icon></NavButton>
              <NavButton aria-label="Next"><Icon w={8} h={11}><path d="M1.500 1L6.500 5.500L1.500 10" /></Icon></NavButton>
              <NavButton aria-label="More sheets"><DotRow /></NavButton>
              <SheetTab $w={83}><span>62700 (2)</span></SheetTab>
              <SheetTab $w={96}><span>buku besar</span></SheetTab>
              <SheetTab $w={73} $active><span>Sheet128</span></SheetTab>
              <SheetTab $w={122} $last><span>JURNAL UMUM</span></SheetTab>
              <NavButton $w={16} aria-label="More"><DotRow /></NavButton>
              <NavButton $w={48} aria-label="New sheet"><Icon w={12} h={12}><path d="M6 0V12M0 6H12" /></Icon></NavButton>
              <NavButton $w={16} aria-label="Resize"><DotRow vertical /></NavButton>
              <HScroll><Tri dir="left" w={8} h={10} /><HTrack /><Tri dir="right" w={8} h={10} /></HScroll>
            </SheetTabs>
          </SheetColumn>
          <FieldsPane />
        </Workspace>
        <StatusBar>
          <span>Ready</span>
          <Accessibility><PersonIcon />Accessibility: Investigate</Accessibility>
          <Spacer />
          <ViewButton $active aria-label="Normal"><Icon w={14} h={13} color="#444"><path d="M0.500 0.500H13.500V12.500H0.500ZM0.500 4.500H13.500M0.500 8.500H13.500M4.800 0.500V12.500M9.200 0.500V12.500" /></Icon></ViewButton>
          <ViewButton aria-label="Page layout"><Icon w={15} h={13} color="#444"><path d="M0.500 0.500H14.500V12.500H0.500ZM3.500 2.500H11.500V10.500H3.500ZM5.500 4.500H9.500M5.500 6.500H9.500M5.500 8.500H9.500" /></Icon></ViewButton>
          <ViewButton aria-label="Page break"><Icon w={14} h={13} color="#444"><path d="M0.500 0.500H13.500V12.500H0.500ZM4.500 0.500V8.500M8.500 0.500V8.500M0.500 8.500H8.500" /></Icon></ViewButton>
          <Zoom><Icon w={8} h={8} color="#999"><path d="M0 4.500H7" /></Icon><input type="range" defaultValue={50} aria-label="Zoom" /><Icon w={8} h={8} color="#999"><path d="M0 4.500H8M4 0.500V8" /></Icon></Zoom>
          <ZoomValue>100%</ZoomValue>
        </StatusBar>
      </AppWindow>
      <OptionsDialog />
    </Screen>
  );
}
